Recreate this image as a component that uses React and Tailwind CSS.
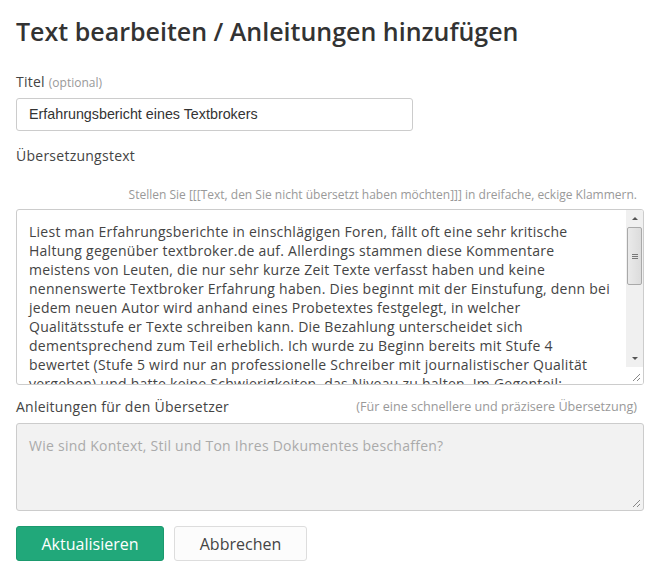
const lines = [
  'Liest man Erfahrungsberichte in einschlägigen Foren, fällt oft eine sehr kritische',
  'Haltung gegenüber textbroker.de auf. Allerdings stammen diese Kommentare',
  'meistens von Leuten, die nur sehr kurze Zeit Texte verfasst haben und keine',
  'nennenswerte Textbroker Erfahrung haben. Dies beginnt mit der Einstufung, denn bei',
  'jedem neuen Autor wird anhand eines Probetextes festgelegt, in welcher',
  'Qualitätsstufe er Texte schreiben kann. Die Bezahlung unterscheidet sich',
  'dementsprechend zum Teil erheblich. Ich wurde zu Beginn bereits mit Stufe 4',
  'bewertet (Stufe 5 wird nur an professionelle Schreiber mit journalistischer Qualität',
  'vergeben) und hatte keine Schwierigkeiten, das Niveau zu halten. Im Gegenteil:',
]

function Grip() {
  return (
    <svg width="9" height="9" viewBox="0 0 9 9" className="absolute bottom-[2px] right-[2px]">
      <path d="M1 8 L8 1 M5 8 L8 5" stroke="#888" strokeWidth="1" />
    </svg>
  )
}

export default function App() {
  return (
    <div className="min-h-screen bg-white px-4 pt-[13px] text-[14px] tracking-[0.25px] text-[#444] [font-family:'Open_Sans',sans-serif]">
      <h1 className="text-[25px] font-semibold leading-[36px] tracking-normal text-[#333]">
        Text bearbeiten / Anleitungen hinzufügen
      </h1>

      <div className="mt-[23px] leading-[20px]">
        Titel <span className="text-[12px] tracking-normal text-[#999]">(optional)</span>
      </div>
      <div className="mt-[5px] flex h-[33px] w-[397px] items-center rounded-[3px] border border-[#ccc] px-[12px] text-[14.3px] tracking-normal text-[#333] [font-family:'Liberation_Sans',Arial,sans-serif]">
        Erfahrungsbericht eines Textbrokers
      </div>

      <div className="mt-[15px] leading-[20px]">Übersetzungstext</div>
      <div className="mt-[21px] pr-[7px] text-right text-[12px] leading-[16px] tracking-normal text-[#999]">
        Stellen Sie [[[Text, den Sie nicht übersetzt haben möchten]]] in dreifache, eckige Klammern.
      </div>

      <div className="relative mt-[6px] flex h-[176px] overflow-hidden rounded-[3px] border border-[#ccc]">
        <div className="flex-1 overflow-hidden pl-[12px] pt-[12px] leading-[19px] text-[#444]">
          {lines.map((l) => (
            <div key={l} className="whitespace-nowrap">{l}</div>
          ))}
        </div>
        <div className="flex w-[17px] flex-col bg-[#f0f0f0]">
          <div className="flex h-[17px] items-center justify-center">
            <div className="h-0 w-0 border-x-[3px] border-b-[3px] border-x-transparent border-b-[#555]" />
          </div>
          <div className="mx-[1px] flex h-[58px] items-center justify-center rounded-[2px] border border-[#a9a9a9] bg-gradient-to-r from-[#eaeaea] to-[#dcdcdc]">
            <div className="flex flex-col gap-[1px]">
              <div className="h-px w-[6px] bg-[#777]" />
              <div className="h-px w-[6px] bg-[#777]" />
              <div className="h-px w-[6px] bg-[#777]" />
            </div>
          </div>
          <div className="flex-1" />
          <div className="flex h-[17px] items-center justify-center">
            <div className="h-0 w-0 border-x-[3px] border-t-[3px] border-x-transparent border-t-[#555]" />
          </div>
          <div className="relative h-[17px] bg-white">
            <Grip />
          </div>
        </div>
      </div>

      <div className="mt-[12px] flex items-center justify-between leading-[20px]">
        <span>Anleitungen für den Übersetzer</span>
        <span className="pr-[7px] text-[12.6px] tracking-normal text-[#999]">(Für eine schnellere und präzisere Übersetzung)</span>
      </div>

      <div className="relative mt-[6px] h-[88px] rounded-[3px] border border-[#ccc] bg-[#f2f2f2] px-[12px] pt-[12px] leading-[19px] text-[#aaa]">
        Wie sind Kontext, Stil und Ton Ihres Dokumentes beschaffen?
        <Grip />
      </div>

      <div className="mt-[15px] flex gap-[10px]">
        <button className="h-[35px] w-[148px] rounded-[3px] border border-[#1b9a6e] bg-[#21a87a] text-[16px] tracking-normal text-white">
          Aktualisieren
        </button>
        <button className="h-[35px] w-[133px] rounded-[3px] border border-[#ddd] bg-[#fcfcfc] text-[16px] tracking-normal text-[#444]">
          Abbrechen
        </button>
      </div>
    </div>
  )
}
